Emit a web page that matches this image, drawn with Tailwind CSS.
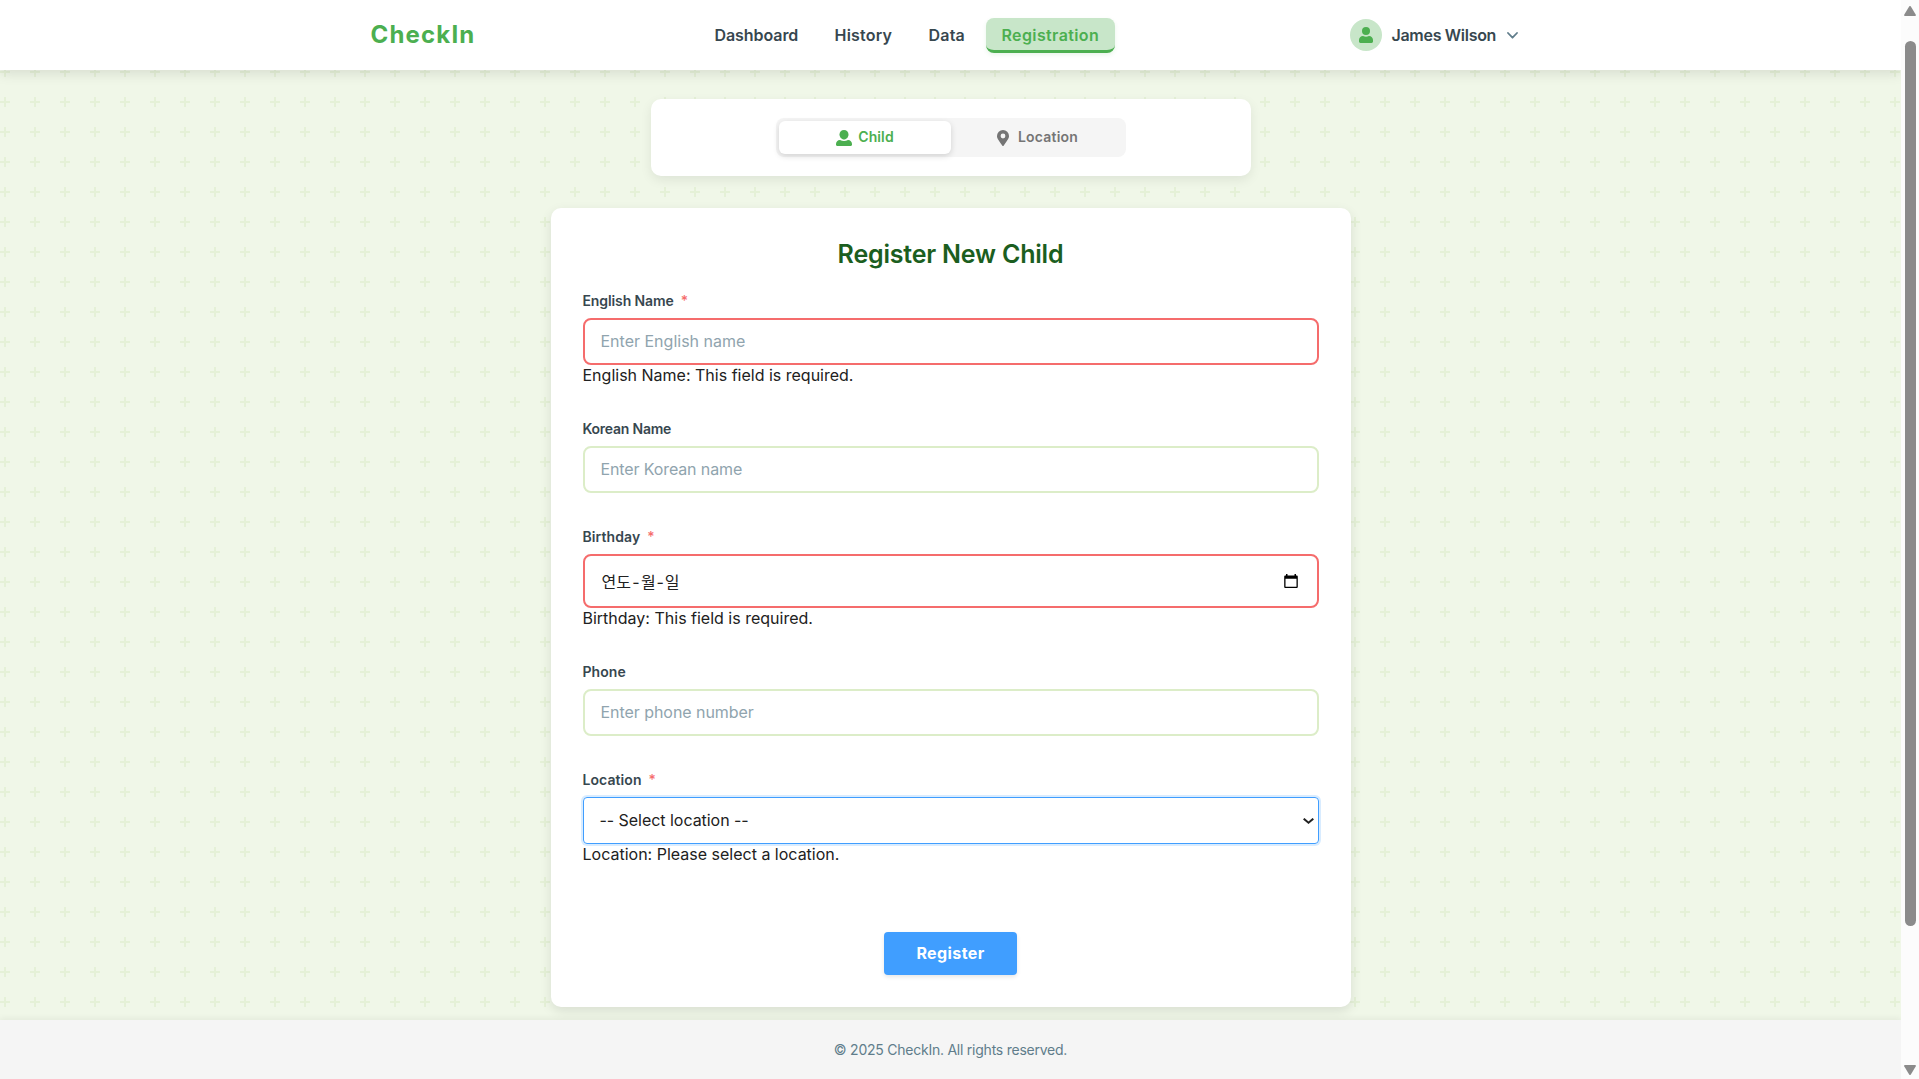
<!DOCTYPE html>
<html lang="en">
<head>
<meta charset="utf-8">
<title>CheckIn</title>
<script src="https://cdn.jsdelivr.net/npm/@tailwindcss/browser@4"></script>
</head>
<body class="flex h-[1079px] overflow-hidden bg-[#f1f8e9] font-['Inter','Noto_Sans_CJK_KR',sans-serif] text-base text-[#212121]">
<div class="relative isolate flex min-w-0 flex-1 flex-col overflow-hidden bg-[#f0f7e8]">
  <svg class="absolute inset-0 -z-10 h-full w-full" aria-hidden="true">
    <defs><pattern id="plus" width="30" height="30" patternUnits="userSpaceOnUse" x="-10" y="27"><path d="M14 10h2v4h4v2h-4v4h-2v-4h-4v-2h4z" fill="#e5f1d7"/></pattern></defs>
    <rect width="100%" height="100%" fill="url(#plus)"/>
  </svg>

  <header class="z-10 h-[70px] shrink-0 bg-white shadow-[0_4px_12px_rgba(0,0,0,0.1)]">
    <div class="mx-auto flex h-full w-[1160px] items-center">
      <a class="w-[327px] pb-px text-2xl font-bold tracking-[1.18px] text-[#4caf50]">CheckIn</a>
      <nav class="flex items-center gap-[5px] font-semibold leading-6 text-[#37474f]">
        <a class="w-[116px] pl-[17px] pb-px tracking-[-0.07px]">Dashboard</a>
        <a class="w-[88px] pl-4 pb-px tracking-[0.2px]">History</a>
        <a class="ml-px w-[67px] pl-4 pb-px tracking-[0.2px]">Data</a>
        <a class="ml-px h-[35px] w-[129px] rounded-lg border-b-3 border-[#4caf50] bg-[#c8e6c9] pl-4 pt-[5px] tracking-[0.38px] text-[#4caf50] shadow-[0_2px_4px_rgba(76,175,80,0.12)]">Registration</a>
      </nav>
      <div class="ml-[235px] flex items-center whitespace-nowrap">
        <span class="flex size-8 items-center justify-center rounded-full bg-[#c8e6c9]">
          <svg class="h-4 w-[14px] fill-[#4caf50]" viewBox="0 0 14 16"><circle cx="7" cy="4" r="4"/><path d="M4 9c1 .5 2 .7 3 .7S9 9.500 10 9c2.300 0 4 1.700 4 4v1.600c0 .8-.6 1.400-1.400 1.400H1.400C.6 16 0 15.400 0 14.600V13c0-2.300 1.700-4 4-4z"/></svg>
        </span>
        <span class="ml-[10px] pb-px font-semibold tracking-[-0.3px] text-[#37474f]">James Wilson</span>
        <svg class="ml-[11px] h-[7px] w-[11px]" viewBox="0 0 11 7" fill="none" stroke="#607d8b" stroke-width="1.800" stroke-linecap="round" stroke-linejoin="round"><path d="M1 1l4.500 4.700L10 1"/></svg>
      </div>
    </div>
  </header>

  <main class="flex flex-1 flex-col items-center pt-[29px]">
    <div class="flex h-[77px] w-[600px] shrink-0 items-center justify-center rounded-[10px] bg-white shadow-[0_4px_12px_rgba(0,0,0,0.08)]">
      <div class="flex h-[39px] w-[350px] rounded-lg bg-[#f5f5f5] p-[3px] text-sm font-semibold">
        <div class="flex w-[172px] items-center justify-center rounded-md bg-white pl-px text-[#4caf50] shadow-[0_2px_6px_rgba(0,0,0,0.15)]">
          <svg class="mr-1.5 h-4 w-4 fill-current" viewBox="0 0 16 16"><path d="M8 0c2.700 0 4.500 2 4.500 4.500S10.500 9.500 8 9.500 3.500 7 3.500 4.500 5.300 0 8 0z"/><path d="M4 10c1.300.6 2.600.9 4 .9s2.700-.3 4-.9c2.400 0 4 1.700 4 4v.8c0 .7-.5 1.200-1.200 1.200H1.200C.5 16 0 15.500 0 14.800V14c0-2.300 1.600-4 4-4z"/></svg>
          <span class="pb-0.5 tracking-[0.1px]">Child</span>
        </div>
        <div class="flex w-[172px] items-center justify-center pl-0.5 text-[#757575]">
          <svg class="mr-[9px] h-4 w-3 fill-current" viewBox="0 0 12 16"><path fill-rule="evenodd" d="M5.400 15.700C.8 9 0 8.300 0 6a6 6 0 0112 0c0 2.300-.8 3-5.400 9.700a.73.73 0 01-1.200 0zM6 8.400a2.400 2.400 0 100-4.800 2.400 2.400 0 000 4.800z"/></svg>
          <span class="pb-0.5 tracking-[0.22px]">Location</span>
        </div>
      </div>
    </div>

    <form class="mt-8 h-[799px] w-[800px] shrink-0 rounded-[10px] bg-white px-8 shadow-[0_4px_12px_rgba(0,0,0,0.1)]">
      <h1 class="pt-8 text-center text-[25px] font-[560] leading-[29px] tracking-[-0.2px] text-[#1b5e20]">Register New Child</h1>

      <div class="mt-[22px] h-[128px]">
        <label class="flex h-5 items-end gap-[7px] text-sm leading-5 font-semibold tracking-[-0.11px] text-[#37474f]">English Name<span class="font-medium text-[#f56c6c]">*</span></label>
        <input class="mt-[7px] block h-[47px] w-full rounded-lg border-2 border-[#f56c6c] px-4 pb-0.5 placeholder:text-[#90a4ae]" placeholder="Enter English name">
        <p class="text-base leading-5">English Name: This field is required.</p>
      </div>

      <div class="h-[108px]">
        <label class="flex h-5 items-end text-sm leading-5 font-semibold tracking-[-0.23px] text-[#37474f]">Korean Name</label>
        <input class="mt-[7px] block h-[47px] w-full rounded-lg border-2 border-[#dcedc8] px-4 pb-0.5 tracking-[-0.12px] placeholder:text-[#90a4ae]" placeholder="Enter Korean name">
      </div>

      <div class="h-[135px]">
        <label class="flex h-5 items-end gap-[7px] text-sm leading-5 font-semibold tracking-[0.1px] text-[#37474f]">Birthday<span class="font-medium text-[#f56c6c]">*</span></label>
        <div class="mt-[7px] flex h-[54px] items-center justify-between rounded-lg border-2 border-[#f56c6c] pl-[17px] pr-[19px]">
          <span class="flex items-center pt-px text-base leading-6"><span>연도</span><span class="w-[10px] text-center">-</span><span>월</span><span class="w-[9px] text-center">-</span><span>일</span></span>
          <svg class="h-[15px] w-[14px]" viewBox="0 0 14 15"><path fill-rule="evenodd" d="M2 0h1.500v1.500h7V0H12v1.500h.5c.8 0 1.300.5 1.300 1.300v10c0 .8-.5 1.300-1.300 1.300h-11C.7 14.100.2 13.600.2 12.800v-10c0-.8.5-1.300 1.300-1.300H2zM1.500 4.800v8h11v-8z"/></svg>
        </div>
        <p class="text-base leading-5">Birthday: This field is required.</p>
      </div>

      <div class="h-[108px]">
        <label class="flex h-5 items-end text-sm leading-5 font-semibold tracking-[0.05px] text-[#37474f]">Phone</label>
        <input class="mt-[7px] block h-[47px] w-full rounded-lg border-2 border-[#dcedc8] px-4 pb-0.5 tracking-[-0.05px] placeholder:text-[#90a4ae]" placeholder="Enter phone number">
      </div>

      <div class="h-[145px]">
        <label class="flex h-5 items-end gap-[7px] text-sm leading-5 font-semibold tracking-[0.08px] text-[#37474f]">Location<span class="font-medium text-[#f56c6c]">*</span></label>
        <div class="mt-[7px] flex h-[47px] items-center justify-between rounded border border-[#409eff] pl-4 pr-1 shadow-[0_0_0_2px_rgba(64,158,255,0.2)]">
          <span class="pb-0.5 tracking-[-0.04px]">-- Select location --</span>
          <svg class="h-[6px] w-[11px]" viewBox="0 0 11 6" fill="none" stroke="#212121" stroke-width="2"><path d="M.7.700l4.800 4 4.800-4"/></svg>
        </div>
        <p class="text-base leading-5">Location: Please select a location.</p>
      </div>

      <div class="flex justify-center pt-[17px]">
        <button type="button" class="h-[43px] w-[133px] rounded bg-[#409eff] pb-0.5 font-bold tracking-[0.4px] text-white shadow-[0_2px_4px_rgba(0,0,0,0.1)]">Register</button>
      </div>
    </form>
  </main>

  <footer class="flex h-[59px] shrink-0 items-center justify-center bg-[#f5f5f5] text-sm tracking-[-0.24px] text-[#607d8b] shadow-[0_-2px_6px_rgba(0,0,0,0.05)]">© 2025 CheckIn. All rights reserved.</footer>
</div>

<aside class="flex w-[18px] shrink-0 flex-col items-center bg-[#fcfcfc] pt-[6px]" aria-hidden="true">
  <svg class="h-[10px] w-3 fill-[#8b8b8b]" viewBox="0 0 12 10"><path d="M5 .7a1.200 1.200 0 012 0l4.800 8c.3.600 0 1.300-.8 1.300H1C.2 10-.1 9.300.2 8.700z"/></svg>
  <div class="mt-[25px] h-[885px] w-[11px] rounded-full bg-[#8b8b8b]"></div>
  <svg class="mt-[139px] h-[10px] w-3 fill-[#8b8b8b]" viewBox="0 0 12 10"><path d="M5 9.300a1.200 1.200 0 002 0l4.800-8C12.100.7 11.800 0 11 0H1C.2 0-.1.7.2 1.300z"/></svg>
</aside>
</body>
</html>
